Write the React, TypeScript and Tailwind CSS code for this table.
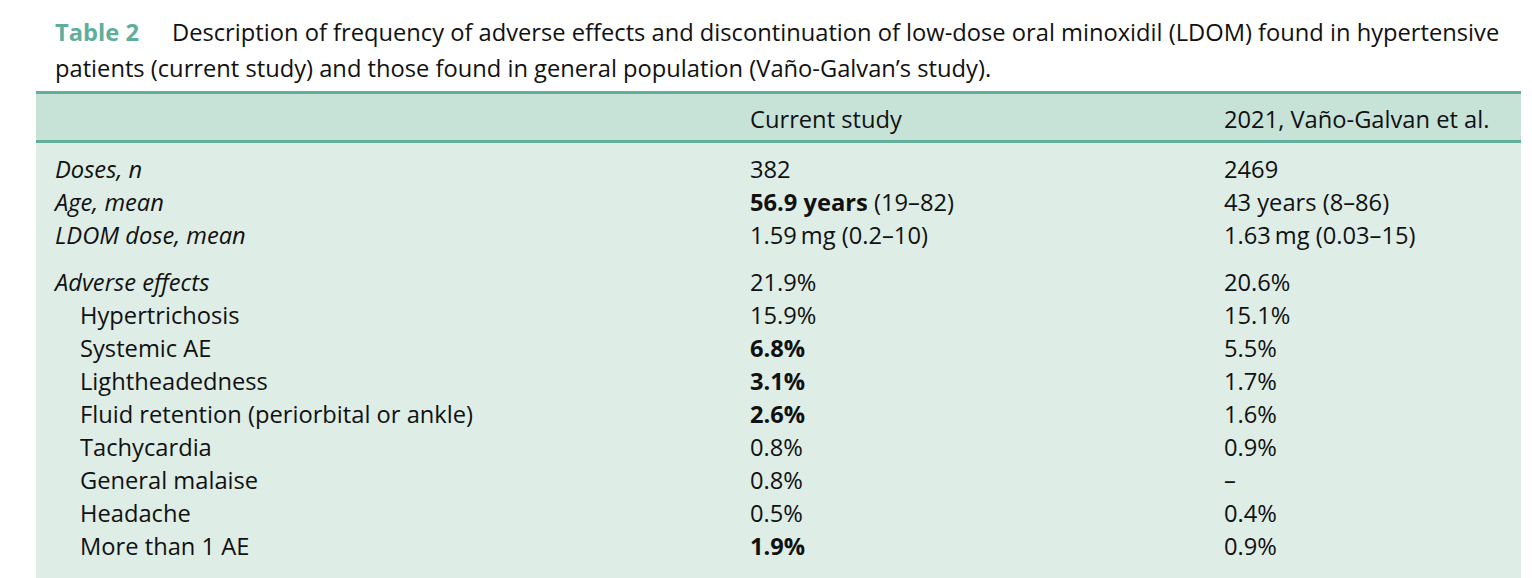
import React from "react";

type Row = {
  label: string;
  italic?: boolean;
  indent?: boolean;
  a: React.ReactNode;
  b: React.ReactNode;
  gapBefore?: boolean;
};

const rows: Row[] = [
  { label: "Doses, n", italic: true, a: "382", b: "2469" },
  {
    label: "Age, mean",
    italic: true,
    a: (
      <>
        <span className="font-bold">56.9 years</span> (19–82)
      </>
    ),
    b: "43 years (8–86)",
  },
  { label: "LDOM dose, mean", italic: true, a: "1.59\u2009mg (0.2–10)", b: "1.63\u2009mg (0.03–15)" },
  { label: "Adverse effects", italic: true, a: "21.9%", b: "20.6%", gapBefore: true },
  { label: "Hypertrichosis", indent: true, a: "15.9%", b: "15.1%" },
  { label: "Systemic AE", indent: true, a: <span className="font-bold">6.8%</span>, b: "5.5%" },
  { label: "Lightheadedness", indent: true, a: <span className="font-bold">3.1%</span>, b: "1.7%" },
  {
    label: "Fluid retention (periorbital or ankle)",
    indent: true,
    a: <span className="font-bold">2.6%</span>,
    b: "1.6%",
  },
  { label: "Tachycardia", indent: true, a: "0.8%", b: "0.9%" },
  { label: "General malaise", indent: true, a: "0.8%", b: "–" },
  { label: "Headache", indent: true, a: "0.5%", b: "0.4%" },
  { label: "More than 1 AE", indent: true, a: <span className="font-bold">1.9%</span>, b: "0.9%" },
];

export default function App() {
  return (
    <div
      className="w-[1532px] h-[578px] overflow-hidden bg-white text-[#111]"
      style={{ fontFamily: '"Open Sans", "Noto Sans", sans-serif' }}
    >
      <div className="pl-[55px] pt-[14px] text-[23.7px] leading-[36px] whitespace-nowrap">
        <div className="flex">
          <span className="font-bold text-[#5fae9b] w-[117px] shrink-0">Table 2</span>
          <span>
            Description of frequency of adverse effects and discontinuation of low-dose oral minoxidil (LDOM) found in
            hypertensive
          </span>
        </div>
        <div>patients (current study) and those found in general population (Vaño-Galvan’s study).</div>
      </div>

      <div className="ml-[36px] w-[1485px] mt-[5px] text-[23.7px] leading-[33px]">
        <div className="border-t-[3px] border-b-[3px] border-[#62b09c] bg-[#c7e3d8] h-[52px] grid grid-cols-[714px_474px_1fr] items-center pt-[4px]">
          <div />
          <div>Current study</div>
          <div>2021, Vaño-Galvan et al.</div>
        </div>
        <div className="bg-[#deede6] pt-[10px] pb-[20px]">
          {rows.map((r, i) => (
            <div
              key={i}
              className={`grid grid-cols-[714px_474px_1fr] ${r.gapBefore ? "mt-[14px]" : ""}`}
            >
              <div className={`${r.indent ? "pl-[44px]" : "pl-[19px]"} ${r.italic ? "italic" : ""}`}>
                {r.label}
              </div>
              <div>{r.a}</div>
              <div>{r.b}</div>
            </div>
          ))}
        </div>
      </div>
    </div>
  );
}
